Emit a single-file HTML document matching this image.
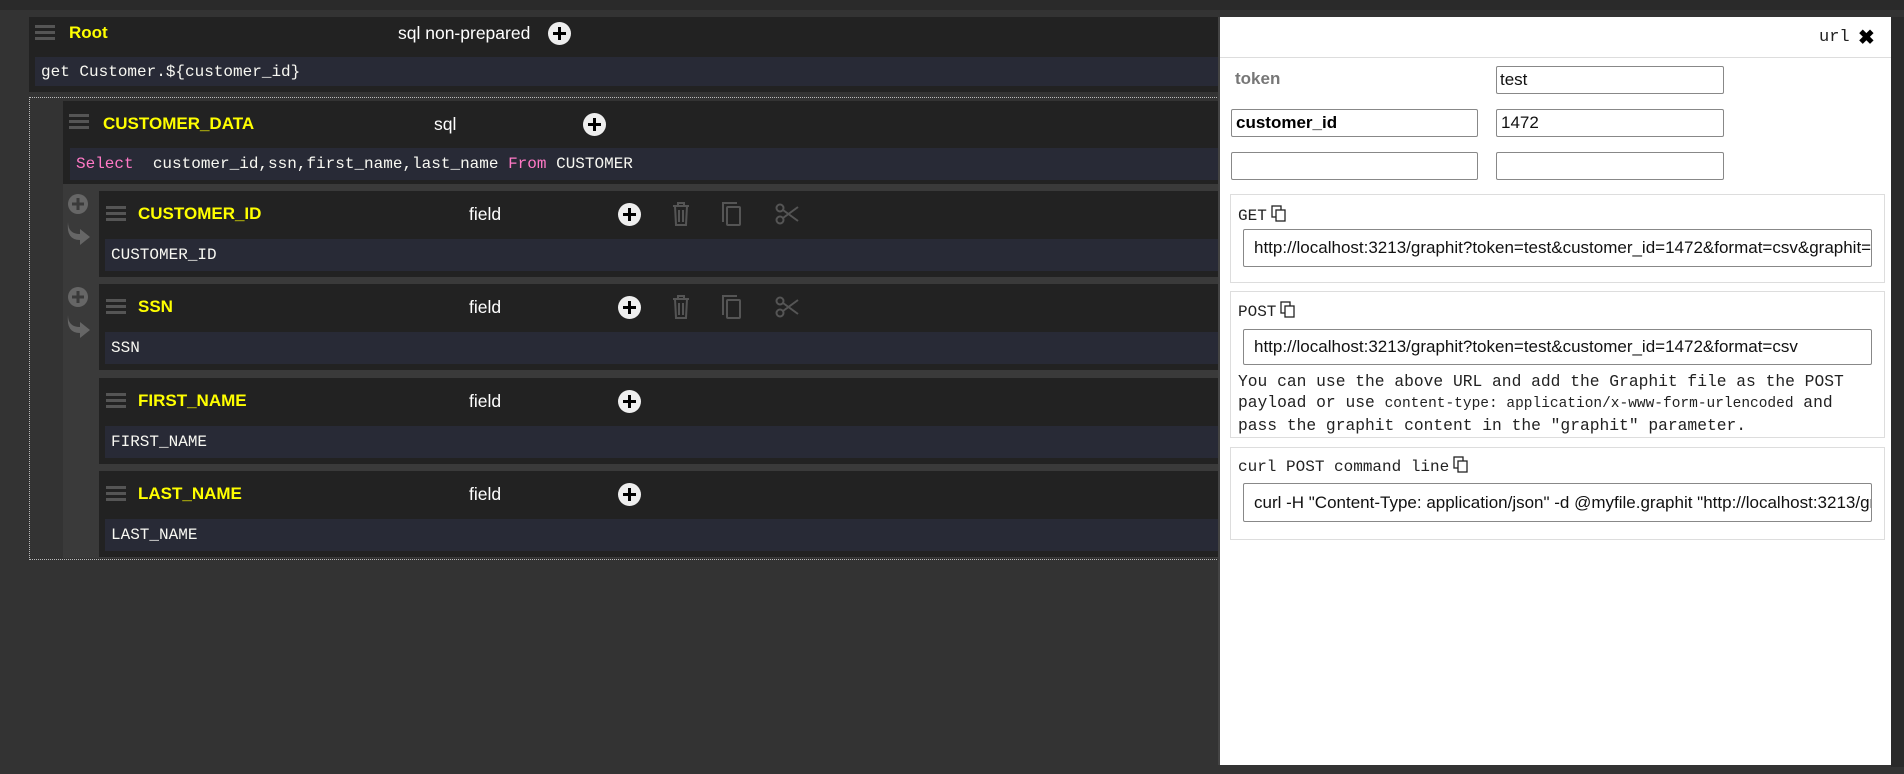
<!DOCTYPE html>
<html><head><meta charset="utf-8"><style>
*{box-sizing:border-box;margin:0;padding:0}
body{width:1904px;height:774px;background:#333;position:relative;overflow:hidden;font-family:"Liberation Sans",sans-serif}
.a{position:absolute}
.blk{position:absolute;background:#222}
.code{position:absolute;background:#282a36;color:#f8f8f2;font:16px "Liberation Mono",monospace;line-height:30px;padding-left:6px;white-space:pre}
.ttl{position:absolute;color:#ff0;font-weight:bold;font-size:17px;line-height:20px}
.typ{position:absolute;color:#fff;font-size:17.5px;line-height:20px}
.ham{position:absolute;width:20px;height:15px;border-top:3px solid #555;border-bottom:3px solid #555}
.ham:after{content:"";position:absolute;left:0;right:0;top:3px;height:3px;background:#555}
.pl{position:absolute;width:23px;height:23px;border-radius:50%;background:#eee}
.pl:before{content:"";position:absolute;left:5px;top:10px;width:13px;height:3px;background:#000}
.pl:after{content:"";position:absolute;left:10px;top:5px;width:3px;height:13px;background:#000}
.pink{color:#ff79c6}
.inp{position:absolute;border:1px solid #888;border-radius:2px;background:#fff;font-size:17px;color:#111;padding-left:10px;white-space:nowrap;overflow:hidden}
.box{position:absolute;border:1px solid #ddd;left:1230px;width:655px}
.mono{font-family:"Liberation Mono",monospace;font-size:16px;color:#222}
.cp{display:inline-block;vertical-align:-2px;margin-left:4px}
</style></head><body>
<div class="a" style="left:0;top:0;width:1904px;height:10px;background:#2a2a2a"></div>

<div class="blk" style="left:29px;top:17px;width:1200px;height:75px"></div>
<div class="ham" style="left:35px;top:25px"></div>
<div class="ttl" style="left:69px;top:23px">Root</div>
<div class="typ" style="left:398px;top:23px">sql non-prepared</div>
<div class="pl" style="left:548px;top:22px"></div>
<div class="code" style="left:35px;top:57px;width:1190px;height:29px">get Customer.${customer_id}</div>

<div class="a" style="left:29px;top:97px;width:1200px;height:463px;border:1px dotted #bbb"></div>
<div class="a" style="left:63px;top:184px;width:1160px;height:374px;background:#3a3a3a"></div>
<div class="blk" style="left:63px;top:101px;width:1160px;height:83px"></div>
<div class="ham" style="left:69px;top:114px"></div>
<div class="ttl" style="left:103px;top:114px">CUSTOMER_DATA</div>
<div class="typ" style="left:434px;top:114px">sql</div>
<div class="pl" style="left:583px;top:113px"></div>
<div class="code" style="left:70px;top:148px;width:1150px;height:32px;line-height:32px"><span class="pink">Select</span>  customer_id,ssn,first_name,last_name <span class="pink">From</span> CUSTOMER</div>

<div class="blk" style="left:99px;top:191px;width:1124px;height:86px"></div>
<div class="ham" style="left:106px;top:206px"></div>
<div class="ttl" style="left:138px;top:204px">CUSTOMER_ID</div>
<div class="typ" style="left:469px;top:204px">field</div>
<div class="pl" style="left:618px;top:203px"></div>
<div class="code" style="left:105px;top:239px;width:1118px;height:32px;line-height:32px">CUSTOMER_ID</div>

<div class="blk" style="left:99px;top:284px;width:1124px;height:86px"></div>
<div class="ham" style="left:106px;top:299px"></div>
<div class="ttl" style="left:138px;top:297px">SSN</div>
<div class="typ" style="left:469px;top:297px">field</div>
<div class="pl" style="left:618px;top:296px"></div>
<div class="code" style="left:105px;top:332px;width:1118px;height:32px;line-height:32px">SSN</div>

<div class="blk" style="left:99px;top:378px;width:1124px;height:86px"></div>
<div class="ham" style="left:106px;top:393px"></div>
<div class="ttl" style="left:138px;top:391px">FIRST_NAME</div>
<div class="typ" style="left:469px;top:391px">field</div>
<div class="pl" style="left:618px;top:390px"></div>
<div class="code" style="left:105px;top:426px;width:1118px;height:32px;line-height:32px">FIRST_NAME</div>

<div class="blk" style="left:99px;top:471px;width:1124px;height:86px"></div>
<div class="ham" style="left:106px;top:486px"></div>
<div class="ttl" style="left:138px;top:484px">LAST_NAME</div>
<div class="typ" style="left:469px;top:484px">field</div>
<div class="pl" style="left:618px;top:483px"></div>
<div class="code" style="left:105px;top:519px;width:1118px;height:32px;line-height:32px">LAST_NAME</div>

<svg class="a" style="left:0;top:0" width="1220" height="560">
<defs>
<g id="gut"><circle cx="0" cy="0" r="10" fill="#666"/><rect x="-6" y="-1.5" width="12" height="3" fill="#3a3a3a"/><rect x="-1.5" y="-6" width="3" height="12" fill="#3a3a3a"/>
<path d="M-10 18 Q-10 30 2 30 L2 25 L12 33 L2 41 L2 36 Q-12 36 -10 18Z" fill="#666"/></g>
<g id="acts" fill="none" stroke="#555" stroke-width="2">
<path d="M-8 -8 H8 M-3 -8 V-11 H3 V-8 M-6 -8 L-5 11 H5 L6 -8 M-2 -4 V8 M2 -4 V8"/>
<g transform="translate(51,0)"><path d="M-9 8 V-11 H5"/><rect x="-5" y="-7" width="13" height="18" rx="1"/></g>
<g transform="translate(106,0)"><circle cx="-7" cy="-6" r="3.5"/><circle cx="-7" cy="6" r="3.5"/><path d="M-4 -4 L11 7 M-4 4 L11 -7"/></g>
</g></defs>
<use href="#gut" x="78" y="204"/><use href="#gut" x="78" y="297"/>
<use href="#acts" x="681" y="214"/><use href="#acts" x="681" y="307"/>
</svg>

<div class="a" style="left:1891px;top:17px;width:13px;height:750px;background:#2a2a2a"></div>

<svg width="0" height="0" style="position:absolute"><defs><g id="cpi" fill="#fff" stroke="#222" stroke-width="1.3"><rect x="1" y="1" width="9" height="11"/><rect x="5" y="5" width="9" height="11"/></g></defs></svg>

<div class="a" style="left:1218px;top:17px;width:673px;height:748px;background:#fff;border-left:2px solid #444"></div>
<div class="a mono" style="left:1819px;top:28px;font-size:17px;color:#222">url</div>
<div class="a" style="left:1858px;top:25px;font-size:20px;font-weight:bold;color:#000">✖</div>
<div class="a" style="left:1220px;top:57px;width:671px;height:1px;background:#ddd"></div>

<div class="a" style="left:1235px;top:69px;font-weight:bold;font-size:17px;color:#777">token</div>
<div class="inp" style="left:1496px;top:66px;width:228px;height:28px;line-height:26px;padding-left:3px">test</div>
<div class="inp" style="left:1231px;top:109px;width:247px;height:28px;line-height:26px;padding-left:4px;font-weight:bold;color:#000">customer_id</div>
<div class="inp" style="left:1496px;top:109px;width:228px;height:28px;line-height:26px;padding-left:4px">1472</div>
<div class="inp" style="left:1231px;top:152px;width:247px;height:28px"></div>
<div class="inp" style="left:1496px;top:152px;width:228px;height:28px"></div>

<div class="box" style="top:194px;height:89px"></div>
<div class="a mono" style="left:1238px;top:205px">GET<svg class="cp" width="15" height="17"><use href="#cpi"/></svg></div>
<div class="inp" style="left:1243px;top:229px;width:629px;height:38px;line-height:36px">http://localhost:3213/graphit?token=test&amp;customer_id=1472&amp;format=csv&amp;graphit=get%20Customer</div>

<div class="box" style="top:291px;height:147px"></div>
<div class="a mono" style="left:1238px;top:301px">POST<svg class="cp" width="15" height="17"><use href="#cpi"/></svg></div>
<div class="inp" style="left:1243px;top:329px;width:629px;height:36px;line-height:34px">http://localhost:3213/graphit?token=test&amp;customer_id=1472&amp;format=csv</div>
<div class="a mono" style="left:1238px;top:371px;line-height:21px;width:645px;font-size:16.3px">You can use the above URL and add the Graphit file as the POST<br>payload or use <span style="font-size:14.5px">content-type: application/x-www-form-urlencoded</span> and<br>pass the graphit content in the "graphit" parameter.</div>

<div class="box" style="top:447px;height:93px"></div>
<div class="a mono" style="left:1238px;top:456px">curl POST command line<svg class="cp" width="15" height="17"><use href="#cpi"/></svg></div>
<div class="inp" style="left:1243px;top:483px;width:629px;height:39px;line-height:37px">curl -H "Content-Type: application/json" -d @myfile.graphit "http://localhost:3213/graphit"</div>
</body></html>
